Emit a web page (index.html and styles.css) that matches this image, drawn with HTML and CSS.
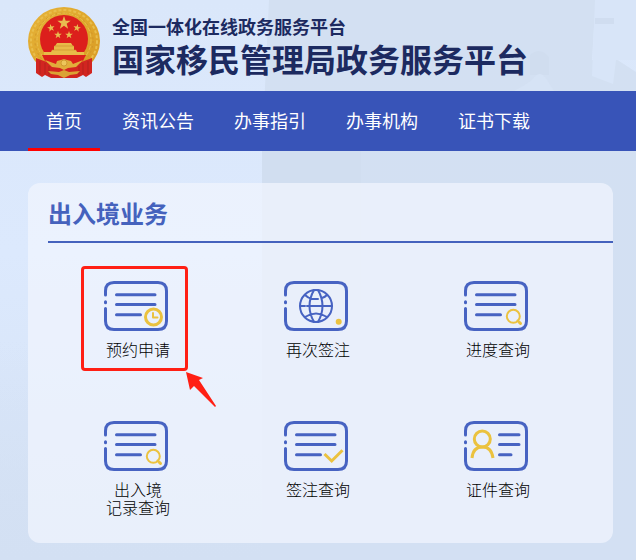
FILE: index.html
```html
<!DOCTYPE html>
<html lang="zh-CN">
<head>
<meta charset="utf-8">
<meta name="viewport" content="width=device-width, initial-scale=1">
<title>国家移民管理局政务服务平台</title>
<link rel="stylesheet" href="styles.css">
</head>
<body>
<svg class="backdrop" viewBox="0 0 636 560" preserveAspectRatio="none" aria-hidden="true">
  <defs>
    <linearGradient id="sky" x1="0" y1="0" x2="0" y2="1">
      <stop offset="0" stop-color="#dae7fa"/>
      <stop offset=".45" stop-color="#dce9fd"/>
      <stop offset="1" stop-color="#d5e2f5"/>
    </linearGradient>
    <linearGradient id="wall" x1="0" y1="0" x2="0" y2="1">
      <stop offset="0" stop-color="#d3e0f2"/>
      <stop offset="1" stop-color="#d3e0f3"/>
    </linearGradient>
    <linearGradient id="hill" x1="0" y1="0" x2="0" y2="1">
      <stop offset="0" stop-color="#d3e0f3" stop-opacity="0"/>
      <stop offset="1" stop-color="#d3e0f3"/>
    </linearGradient>
  </defs>
  <rect width="636" height="560" fill="url(#sky)"/>
  <path d="M269 0H595V18H614V27H594L592 60L616 59L636 72V560H262V151Z" fill="url(#wall)"/>
  <path d="M595 0H636V60L616 60L613 84L592 76Z" fill="#d8e5f8"/>
  <path d="M595 18H614V24H595Z" fill="#d0ddf0"/>
  <path d="M530 55Q540 46 549 57V75H530Z" fill="#d0ddef"/>
  <path d="M514 91Q524 86 532 80Q540 68 547 80L554 91Z" fill="#d6e3f5"/>
  <path d="M262 151H361V300H262Z" fill="#d1def0"/>
  <path d="M0 340H262V560H0Z" fill="url(#hill)"/>
</svg>

<header class="header">
  <svg class="emblem" viewBox="0 0 72 72" role="img" aria-label="国徽">
    <defs>
      <linearGradient id="gold" x1="0" y1="0" x2="1" y2="1">
        <stop offset="0" stop-color="#e6b33a"/>
        <stop offset=".5" stop-color="#dfa72c"/>
        <stop offset="1" stop-color="#d99a25"/>
      </linearGradient>
      <path id="star" d="M0-1L.24-.32L.95-.31L.38.12L.59.81L0 .4L-.59.81L-.38.12L-.95-.31L-.24-.32Z"/>
    </defs>
    <ellipse cx="36" cy="34" rx="36" ry="34" fill="url(#gold)"/>
    <ellipse cx="36" cy="34" rx="33" ry="31" fill="none" stroke="#e9be4c" stroke-width="2" stroke-dasharray="3 2"/>
    <ellipse cx="36" cy="34" rx="29" ry="28" fill="none" stroke="#d0952a" stroke-dasharray="2 3"/>
    <ellipse cx="36" cy="33" rx="27" ry="27" fill="none" stroke="#e8bd4a" stroke-dasharray="4 2"/>
    <circle cx="36" cy="32" r="24" fill="#dc1f1c"/>
    <g fill="#e9bd50">
      <use href="#star" transform="translate(36 16) scale(7)"/>
      <use href="#star" transform="translate(23 21) rotate(-12) scale(4)"/>
      <use href="#star" transform="translate(49 21) rotate(12) scale(4)"/>
      <use href="#star" transform="translate(30 28) scale(4)"/>
      <use href="#star" transform="translate(41 28) scale(4)"/>
    </g>
    <path d="M29 36H43L45 39H46V43H48L49 45H56V48H16V45H23L24 43H26V39H27Z" fill="#e8bb48"/>
    <path d="M26 39H46M24 43H48" stroke="#c98b2a" stroke-width=".6"/>
    <path d="M14 48H58L55 54Q46 58 36 58Q26 58 17 54Z" fill="#dc1f1c"/>
    <path d="M8 51Q18 54 28 60H44Q54 54 64 51L64 66L58 70L55 68L49 71H23L17 68L14 70L8 66Z" fill="#d22520"/>
    <path d="M12 54V67M17 56V67M21 59V69M60 54V67M55 56V67M51 59V69" stroke="#b3221d"/>
    <path d="M17 53L28 57L29 54L33 53L36 52L39 53L43 54L45 57L55 53L48 60L40 61L36 63L32 61L24 60Z" fill="#e1ae3b"/>
    <circle cx="36" cy="56" r="3" fill="#edc65b" stroke="#c58c28" stroke-width=".7"/>
    <path d="M20 64L31 65L36 63L41 65L52 64L49 67L42 68L36 71L30 68L23 67Z" fill="#dba334"/>
  </svg>
  <div class="brand">
    <p class="brand-sub">全国一体化在线政务服务平台</p>
    <h1 class="brand-name">国家移民管理局政务服务平台</h1>
  </div>
</header>

<nav class="nav">
  <a class="nav-link active" href="#">首页</a>
  <a class="nav-link" href="#">资讯公告</a>
  <a class="nav-link" href="#">办事指引</a>
  <a class="nav-link" href="#">办事机构</a>
  <a class="nav-link" href="#">证书下载</a>
</nav>

<main class="panel">
  <h2 class="panel-title">出入境业务</h2>
  <div class="services">
    <a class="service" href="#">
      <svg class="icon" viewBox="0 0 68 50" aria-hidden="true">
        <path id="frame" class="blue" d="M1.500 14V10Q1.500 1.500 10 1.500H54Q62.500 1.500 62.500 10V40Q62.500 48.500 54 48.500H10Q1.500 48.500 1.500 40V27.500M1.500 20.700V21.700"/>
        <path id="lines" class="blue" d="M12.500 13.700H51M12.500 23.500H51M12.500 33.700H36.500"/>
        <g class="gold"><circle cx="49.500" cy="36" r="8"/><path class="thin" d="M49 32V36.500H53.500"/></g>
      </svg>
      <span>预约申请</span>
      <span class="highlight"></span>
      <svg class="pointer" viewBox="0 0 31 35" aria-hidden="true"><path d="M0 0L17 6L13 8L30 34L29 35L8 14L4 18Z" fill="#ff1f14"/></svg>
    </a>
    <a class="service" href="#">
      <svg class="icon" viewBox="0 0 68 50" aria-hidden="true">
        <use href="#frame"/>
        <g class="blue thin"><circle cx="32" cy="25" r="16"/><path d="M30 9Q21 25 30 41M34 9Q43 25 34 41M16 25H21M23 25H25M27 25H48M21 14Q24 17 28 18H34M38 17Q41 16 43 14M21 36Q32 29 43 36"/></g>
        <circle cx="54.700" cy="40.700" r="3" fill="#ebc23f"/>
      </svg>
      <span>再次签注</span>
    </a>
    <a class="service" href="#">
      <svg class="icon" viewBox="0 0 68 50" aria-hidden="true">
        <use href="#frame"/><use href="#lines"/>
        <g id="search" class="gold"><circle class="thin" cx="49.300" cy="35.300" r="6.500"/><path class="thin" d="M53.500 39.500L55 41"/><path d="M55 41L56.500 42.500"/></g>
      </svg>
      <span>进度查询</span>
    </a>
    <a class="service" href="#">
      <svg class="icon" viewBox="0 0 68 50" aria-hidden="true">
        <use href="#frame"/><use href="#lines"/><use href="#search"/>
      </svg>
      <span>出入境<br>记录查询</span>
    </a>
    <a class="service" href="#">
      <svg class="icon" viewBox="0 0 68 50" aria-hidden="true">
        <use href="#frame"/><use href="#lines"/>
        <path class="gold check" d="M40.500 33L47.700 40L58.500 29.300"/>
      </svg>
      <span>签注查询</span>
    </a>
    <a class="service" href="#">
      <svg class="icon" viewBox="0 0 68 50" aria-hidden="true">
        <use href="#frame"/>
        <path class="blue" d="M35.500 13.700H55M35.500 23.500H55M35.500 33.700H47"/>
        <g class="gold check"><circle cx="18.300" cy="18" r="8"/><path d="M8 37Q9 26 18.500 26Q27.500 26 29 37"/></g>
      </svg>
      <span>证件查询</span>
    </a>
  </div>
</main>
</body>
</html>
```
FILE: styles.css
```css
* {
  box-sizing: border-box;
}

body {
  position: relative;
  min-height: 100vh;
  margin: 0;
  padding-bottom: 17px;
  background: #dae7fa;
  font-family: "Noto Sans CJK SC", sans-serif;
}

a {
  color: inherit;
  text-decoration: none;
}

.backdrop {
  position: absolute;
  inset: 0;
  z-index: -1;
  width: 100%;
  height: 100%;
}

.header {
  display: flex;
  gap: 12px;
  padding: 7px 28px 12px;
}

.emblem {
  width: 72px;
  height: 72px;
}

.brand {
  padding-top: 7px;
  color: #1c2a60;
  white-space: nowrap;
}

.brand-sub,
.brand-name {
  margin: 0;
  font-weight: 700;
}

.brand-sub {
  font-size: 18px;
  line-height: 24px;
}

.brand-name {
  font-size: 32px;
  line-height: 40px;
}

.nav {
  display: flex;
  gap: 4px;
  padding: 0 28px;
  background: #3854b8;
  color: #fff;
  font-size: 18px;
  line-height: 58px;
  white-space: nowrap;
}

.nav-link {
  padding: 0 18px 2px;
}

.nav-link.active {
  box-shadow: inset 0 -3px #f00;
}

.panel {
  margin: 32px 23px 0 28px;
  padding: 12px 0 0 20px;
  border-radius: 12px;
  background: rgba(240, 244, 254, 0.75);
}

.panel-title {
  margin: 0;
  padding-bottom: 10px;
  border-bottom: 2px solid #4562bd;
  color: #4562bd;
  font-size: 24px;
  line-height: 36px;
}

.services {
  display: grid;
  grid-template-columns: repeat(3, 1fr);
  grid-auto-rows: 140px;
  padding: 20px 25px 0 0;
}

.service {
  position: relative;
  display: flex;
  flex-direction: column;
  align-items: center;
  gap: 9px;
  padding-top: 18px;
  color: #000;
  font-size: 16px;
  font-weight: 300;
  line-height: 18px;
  text-align: center;
}

.icon {
  width: 68px;
  height: 50px;
}

.blue,
.gold {
  fill: none;
  stroke: #4763c2;
  stroke-width: 3;
  stroke-linecap: round;
  stroke-linejoin: round;
}

.gold {
  stroke: #ebc23f;
}

.thin {
  stroke-width: 2;
}

.check {
  stroke-linecap: butt;
  stroke-linejoin: miter;
}

.highlight {
  position: absolute;
  top: 3px;
  left: calc(50% - 57px);
  width: 107px;
  height: 105px;
  border: 3px solid #ff1f14;
  border-radius: 4px;
}

.pointer {
  position: absolute;
  top: 109px;
  left: calc(50% + 48px);
  width: 31px;
  height: 35px;
}
```
